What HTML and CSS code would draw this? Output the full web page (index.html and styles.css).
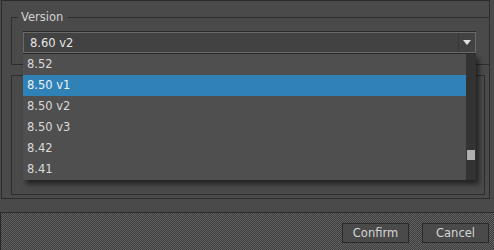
FILE: index.html
```html
<!DOCTYPE html>
<html>
<head>
<meta charset="utf-8">
<link rel="stylesheet" href="styles.css">
</head>
<body>
<div class="frame">
  <fieldset class="group group-version">
    <legend class="legend">Version</legend>
    <div class="combo">
      <span class="combo-value">8.60 v2</span>
      <span class="combo-button"><svg width="8" height="5" viewBox="0 0 8 5"><path d="M0 0H8L4 5Z" fill="#e2e2e2"/></svg></span>
    </div>
  </fieldset>
  <fieldset class="group group-second">
    <legend class="legend legend-empty"></legend>
  </fieldset>
</div>
<div class="footer">
  <button class="btn">Confirm</button>
  <button class="btn">Cancel</button>
</div>
<div class="dropdown">
  <ul class="options">
    <li class="option">8.52</li>
    <li class="option selected">8.50 v1</li>
    <li class="option">8.50 v2</li>
    <li class="option">8.50 v3</li>
    <li class="option">8.42</li>
    <li class="option">8.41</li>
  </ul>
  <div class="scrollbar"><div class="thumb"></div></div>
</div>
</body>
</html>
```
FILE: styles.css
```css
html, body {
  margin: 0;
  padding: 0;
}
body {
  width: 494px;
  height: 250px;
  overflow: hidden;
  background: #4a4a4a;
  font-family: "DejaVu Sans", Verdana, sans-serif;
  font-size: 11.5px;
  color: #dcdcdc;
  position: relative;
}
.frame {
  box-sizing: border-box;
  margin-left: 1px;
  width: 489px;
  height: 199px;
  border: 1px solid #2c2c2c;
  padding: 10px 4px 0 9px;
  display: flex;
  flex-direction: column;
}
.group {
  margin: 0;
  border: 1px solid #2e2e2e;
  min-width: 0;
}
.legend {
  padding: 0 5px 0 3px;
  margin-left: -5px;
  line-height: 13px;
  color: #d2d2d2;
}
.group-version {
  height: 54px;
  box-sizing: border-box;
  margin-right: -5px;
  padding: 8px 13px 0 11px;
}
.legend-empty {
  padding: 0;
  margin-left: 0;
  width: 0;
}
.group-second {
  margin-top: 10px;
  height: 120px;
  box-sizing: border-box;
  padding: 0;
}
.combo {
  box-sizing: border-box;
  height: 21px;
  background: #424242;
  border: 1px solid #6a6a6a;
  box-shadow: 0 -1px 0 #2a2a2a, 0 1px 0 #2a2a2a;
  display: flex;
  align-items: center;
  padding-left: 6px;
  color: #e6e6e6;
}
.combo-value {
  flex: 1;
}
.combo-button {
  width: 16px;
  height: 19px;
  border-left: 1px solid #383838;
  display: flex;
  align-items: center;
  justify-content: center;
}
.footer {
  margin-top: 13px;
  box-sizing: border-box;
  height: 38px;
  border-top: 1px solid #2a2a2a;
  border-left: 1px solid #2a2a2a;
  background-color: #585858;
  background-image: repeating-conic-gradient(#3f3f3f 0 25%, #606060 0 50%);
  background-size: 2px 2px;
  display: flex;
  justify-content: flex-end;
  align-items: flex-start;
  gap: 13px;
  padding: 10px 5px 0 0;
}
.btn {
  box-sizing: border-box;
  width: 67px;
  height: 20px;
  margin: 0;
  padding: 0;
  background: #4a4a4a;
  border: 1px solid #2a2a2a;
  color: #d6d6d6;
  font-family: "DejaVu Sans", Verdana, sans-serif;
  font-size: 11.5px;
}
.dropdown {
  position: absolute;
  left: 23px;
  top: 54px;
  width: 453px;
  height: 126px;
  display: flex;
  background: #4f4f4f;
  box-shadow: 3px 4px 5px rgba(0, 0, 0, 0.55);
}
.options {
  list-style: none;
  margin: 0;
  padding: 0;
  flex: 1;
}
.option {
  height: 21px;
  line-height: 21px;
  padding-left: 4px;
  color: #dadada;
}
.option.selected {
  background: #3082b6;
  color: #eaf2f8;
}
.scrollbar {
  width: 10px;
  background: #333333;
  display: flex;
  flex-direction: column;
  justify-content: flex-end;
  padding: 0 1px 20px 1px;
  box-sizing: border-box;
}
.thumb {
  height: 10px;
  background: #b0b0b0;
}
```
